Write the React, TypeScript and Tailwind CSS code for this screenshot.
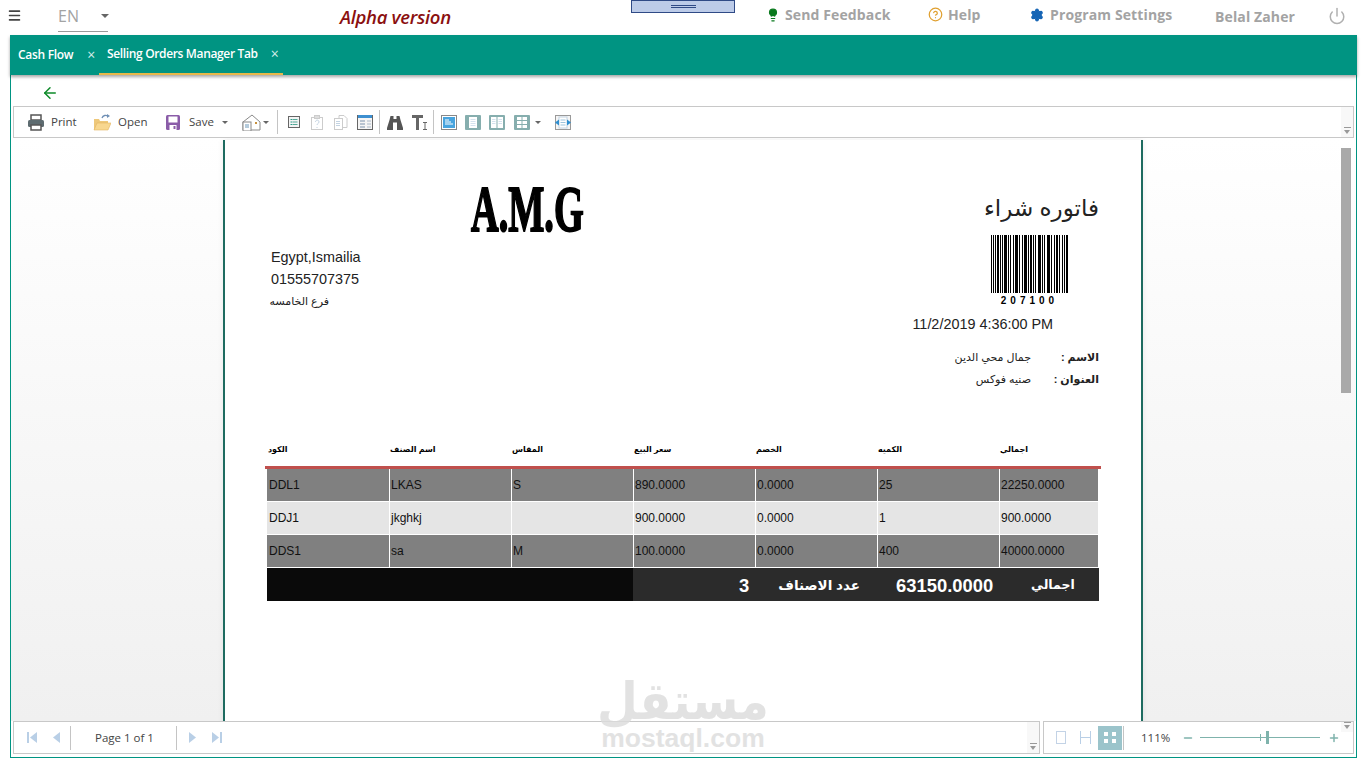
import { ArrowLeft, Menu, Power, Settings, Lightbulb, CircleHelp, Minus, Plus } from "lucide-react";

const columns = ["الكود", "اسم الصنف", "المقاس", "سعر البيع", "الخصم", "الكميه", "اجمالي"];

const rows = [
  { bg: "bg-[#808080]", cells: ["DDL1", "LKAS", "S", "890.0000", "0.0000", "25", "22250.0000"] },
  { bg: "bg-[#e5e5e5]", cells: ["DDJ1", "jkghkj", "", "900.0000", "0.0000", "1", "900.0000"] },
  { bg: "bg-[#808080]", cells: ["DDS1", "sa", "M", "100.0000", "0.0000", "400", "40000.0000"] },
];

// x, width of each bar, read off the reference
const bars = [
  [0, 1], [2, 1], [4, 1], [6, 2], [9, 1], [11, 1], [13, 3], [17, 1], [19, 1], [22, 1], [24, 3], [28, 1], [31, 1],
  [33, 3], [37, 1], [39, 2], [42, 1], [44, 1], [47, 3], [51, 1], [53, 1], [56, 3], [60, 1], [63, 1], [65, 2],
  [68, 1], [71, 1], [73, 1], [75, 2],
];

function Caret({ className = "" }: { className?: string }) {
  return <span className={"inline-block h-0 w-0 border-x-[3px] border-t-[3px] border-x-transparent border-t-[#666] " + className} />;
}

function Grip() {
  return (
    <div className="flex w-[12px] shrink-0 flex-col items-center justify-end self-stretch bg-[#f8f8f8] pb-[3px]">
      <div className="mb-[2px] h-px w-[7px] bg-[#999]" />
      <span className="h-0 w-0 border-x-[3px] border-t-[4px] border-x-transparent border-t-[#999]" />
    </div>
  );
}

function Sep() {
  return <div className="h-[24px] w-px shrink-0 bg-[#c4c4c4]" />;
}

function PageIcon({ children, w = 16 }: { children: React.ReactNode; w?: number }) {
  return (
    <svg width={w} height="17" viewBox={`0 0 ${w} 17`} className="shrink-0">
      {children}
    </svg>
  );
}

function PrintIcon() {
  return (
    <PageIcon w={18}>
      <rect x="4" y="1" width="10" height="5" fill="#fff" stroke="#555" strokeWidth="1.5" />
      <rect x="1" y="6" width="16" height="7" rx="1.5" fill="#5d6b70" />
      <rect x="4" y="11" width="10" height="5" fill="#fff" stroke="#555" strokeWidth="1.5" />
    </PageIcon>
  );
}

function OpenIcon() {
  return (
    <PageIcon w={18}>
      <path d="M1 5h5l1 2h8v9H1z" fill="#eec87a" />
      <path d="M4 9h14l-3 7H1z" fill="#f8d78f" stroke="#e3b563" strokeWidth=".6" />
      <path d="M9 4c1-3 4-3 6-2" fill="none" stroke="#6f8fb5" strokeWidth="1.3" />
      <path d="M14 0l3 2-3 2z" fill="#6f8fb5" />
    </PageIcon>
  );
}

function SaveIcon() {
  return (
    <PageIcon>
      <rect x="1" y="1" width="14" height="15" rx="1.5" fill="#8a5ca8" />
      <rect x="3.5" y="2.5" width="9" height="6" fill="#fff" />
      <rect x="4.5" y="11" width="7" height="5" fill="#fff" />
      <rect x="8.5" y="12" width="2" height="3" fill="#8a5ca8" />
    </PageIcon>
  );
}

function ExportIcon() {
  return (
    <PageIcon w={21}>
      <path d="M2 8L11 1l8 7v8H2z" fill="#fff" stroke="#8a8a8a" />
      <rect x="2" y="8" width="8" height="9" fill="#fff" stroke="#888" />
      <path d="M4 11h4M4 13h4" stroke="#6a97b8" />
      <rect x="14" y="8" width="2" height="2" fill="#c8913d" />
    </PageIcon>
  );
}

function ParamsIcon() {
  return (
    <PageIcon w={14}>
      <rect x="1.500" y="2.500" width="11" height="11" fill="#f4f4f4" stroke="#666" />
      <path d="M3.500 5.500h2M3.500 8h2M3.500 10.500h2" stroke="#2a9a88" />
      <path d="M6 5.500h4.500M6 8h4.500M6 10.500h4.500" stroke="#55aa99" />
    </PageIcon>
  );
}

function ClipboardIcon() {
  return (
    <PageIcon w={14}>
      <rect x="1.500" y="3.500" width="11" height="12" fill="#fff" stroke="#ccc" />
      <rect x="4.500" y="1.500" width="5" height="3" fill="#ddd" stroke="#ccc" />
      <path d="M5.500 8c0-2.500 3.500-2.500 3.500 0 0 1.500-2 1.500-2 3M7 13v1" fill="none" stroke="#c3d3e2" />
    </PageIcon>
  );
}

function CopyIcon() {
  return (
    <PageIcon w={15}>
      <path d="M6 1.500h5l3 3v9H6z" fill="#fff" stroke="#ccc" />
      <rect x="1.500" y="4.500" width="8" height="11" fill="#fff" stroke="#ccc" />
      <path d="M3 7.500h4M3 9.500h4M3 11.500h4" stroke="#c3d3e2" />
    </PageIcon>
  );
}

function TableIcon() {
  return (
    <PageIcon>
      <rect x=".5" y="1.500" width="15" height="14" fill="#f5f5f5" stroke="#666" />
      <rect x="1" y="1" width="14" height="3" fill="#3d8fd0" />
      <path d="M3 7h5M3 10h5M3 13h5" stroke="#7d93ad" />
      <path d="M10 7h4M10 10h4M10 13h4" stroke="#aab8c8" />
    </PageIcon>
  );
}

function BinocularsIcon() {
  return (
    <PageIcon>
      <path d="M3.500 2h3v3h3V2h3l1 4 2.500 8v2H10V8.500H6V16H0v-2l2.500-8z" fill="#555" />
    </PageIcon>
  );
}

function TextCursorIcon() {
  return (
    <PageIcon>
      <path d="M0 1h11v3H7v12H4V4H0z" fill="#666" />
      <path d="M11 8.500h4M13 8.500v7M11 15.500h4" stroke="#666" fill="none" />
    </PageIcon>
  );
}

function ViewIcon({ kind }: { kind: string }) {
  if (kind === "blue")
    return (
      <PageIcon>
        <rect x=".5" y="1.500" width="15" height="14" fill="#fff" stroke="#888" />
        <rect x="2" y="3" width="12" height="11" fill="#48a4de" />
        <path d="M4 6h4M4 8h6M4 10h8" stroke="#fff" />
      </PageIcon>
    );
  return (
    <PageIcon>
      <rect x="0" y="1" width="16" height="15" rx="1" fill="#86aeae" />
      {kind === "one" && (
        <>
          <rect x="4" y="3" width="8" height="11" fill="#fff" />
          <path d="M5.500 5.500h5M5.500 7.500h5M5.500 9.500h5M5.500 11.500h5" stroke="#d5e2ee" />
        </>
      )}
      {kind === "two" && (
        <>
          <rect x="2" y="3" width="5.500" height="11" fill="#fff" />
          <rect x="8.500" y="3" width="5.500" height="11" fill="#fff" />
          <path d="M3 5.500h3.500M3 7.500h3.500M3 9.500h3.500M9.500 5.500H13M9.500 7.500H13M9.500 9.500H13" stroke="#d5e2ee" />
        </>
      )}
      {kind === "four" && (
        <>
          <rect x="3" y="3" width="4.500" height="3" fill="#fff" />
          <rect x="8.500" y="3" width="4.500" height="3" fill="#fff" />
          <rect x="3" y="7" width="4.500" height="3" fill="#fff" />
          <rect x="8.500" y="7" width="4.500" height="3" fill="#fff" />
          <rect x="3" y="11" width="4.500" height="3" fill="#fff" />
          <rect x="8.500" y="11" width="4.500" height="3" fill="#fff" />
        </>
      )}
    </PageIcon>
  );
}

function FitWidthIcon() {
  return (
    <PageIcon>
      <rect x=".5" y="1.500" width="15" height="14" fill="#f5f5f5" stroke="#999" />
      <rect x="4" y="3" width="8" height="11" fill="#fff" stroke="#c3d3e2" />
      <path d="M5.500 6h5M5.500 8.500h5M5.500 11h5" stroke="#9ec4dd" />
      <path d="M0 8.500l4-3v6zM16 8.500l-4-3v6z" fill="#2f8fd0" />
    </PageIcon>
  );
}

function NavIcon({ dir, edge }: { dir: "left" | "right"; edge?: boolean }) {
  const d = dir === "left" ? "M8 1v11L1 6.500z" : "M1 1v11l7-5.500z";
  return (
    <svg width={edge ? 11 : 9} height="13" viewBox={`0 0 ${edge ? 11 : 9} 13`} className="shrink-0">
      {edge && dir === "left" && <rect x="0" y="1" width="2" height="11" fill="#b9cfe6" />}
      <path d={d} fill="#b9cfe6" transform={edge && dir === "left" ? "translate(2 0)" : ""} />
      {edge && dir === "right" && <rect x="9" y="1" width="2" height="11" fill="#b9cfe6" />}
    </svg>
  );
}

export default function App() {
  return (
    <div className="relative h-[768px] w-[1366px] overflow-hidden bg-white font-['Open_Sans',sans-serif]">
      {/* top strip */}
      <header className="relative flex h-[35px] items-center text-[14px] font-bold tracking-[0.12px] text-[#a3a3a3]">
        <Menu className="ml-[7px] -translate-y-[2px] text-[#444]" size={15} strokeWidth={2.5} />
        <div className="ml-[36px] flex h-[32px] w-[50px] items-center self-start border-b border-[#999] text-[16px] font-normal tracking-normal">
          <span>EN</span>
          <Caret className="ml-[22px] border-x-[4px] border-t-[4px]" />
        </div>
        <span className="ml-[232px] w-[111px] -translate-y-px whitespace-nowrap text-[18.5px] font-semibold italic tracking-[-0.3px] text-[#8b1010]">Alpha version</span>
        <div className="absolute left-[631px] top-0 flex h-[13px] w-[104px] flex-col items-center justify-center gap-[1px] border border-[#2f4a86] bg-[#bccbe8]">
          <div className="h-px w-[25px] bg-[#2f4a86]" />
          <div className="h-px w-[25px] bg-[#2f4a86]" />
        </div>
        <Lightbulb className="ml-[315px] -translate-y-[3px] fill-[#0a7a1e] text-[#0a7a1e]" size={14} />
        <span className="ml-[5px] w-[105px] -translate-y-[3px] whitespace-nowrap">Send Feedback</span>
        <CircleHelp className="ml-[38px] -translate-y-[3px] text-[#e0a030]" size={15} />
        <span className="ml-[5px] w-[33px] -translate-y-[3px]">Help</span>
        <Settings className="ml-[49px] -translate-y-[3px] fill-[#1665b5] text-[#1665b5]" size={14} />
        <span className="ml-[6px] w-[122px] -translate-y-[3px] whitespace-nowrap">Program Settings</span>
        <span className="ml-[43px] w-[78px] -translate-y-[1px] whitespace-nowrap">Belal Zaher</span>
        <Power className="ml-[35px] -translate-y-[2px] text-[#b0b0b0]" size={18} />
      </header>

      <main className="ml-[10px] flex h-[723px] w-[1347px] flex-col border-x border-b border-[#009482]">
        {/* tabs */}
        <div className="-mx-px flex h-[40px] shrink-0 items-end bg-[#009482] text-[12px] font-semibold text-white shadow-[0_2px_3px_rgba(0,0,0,0.35)]">
          <div className="flex h-[40px] w-[89px] items-center pl-[8px]">
            <span className="whitespace-nowrap tracking-[-0.3px]">Cash Flow</span>
            <span className="ml-[14px] -translate-y-[1px] text-[14px] font-normal text-[#d5eeea]">×</span>
          </div>
          <div className="flex h-[40px] w-[184px] items-center border-b-2 border-[#e8b84a] pl-[8px]">
            <span className="whitespace-nowrap tracking-[-0.35px]">Selling Orders Manager Tab</span>
            <span className="ml-[13px] -translate-y-[1px] text-[14px] font-normal text-[#d5eeea]">×</span>
          </div>
        </div>

        {/* back */}
        <div className="flex h-[31px] shrink-0 items-center pl-[30px] pt-[4px]">
          <ArrowLeft className="text-[#0d8a28]" size={18} strokeWidth={2} />
        </div>

        {/* report toolbar */}
        <div className="mx-[2px] flex h-[32px] shrink-0 items-center border border-[#c8c8c8] text-[11.5px] text-[#444]">
          <div className="flex flex-1 items-center">
            <div className="ml-[13px]"><PrintIcon /></div>
            <span className="ml-[6px] w-[25px]">Print</span>
            <div className="ml-[17px]"><OpenIcon /></div>
            <span className="ml-[7px] w-[29px]">Open</span>
            <div className="ml-[18px]"><SaveIcon /></div>
            <span className="ml-[8px] w-[25px]">Save</span>
            <Caret className="ml-[8px]" />
            <div className="ml-[13px]"><ExportIcon /></div>
            <Caret className="ml-[1px]" />
            <div className="ml-[8px]"><Sep /></div>
            <div className="ml-[9px]"><ParamsIcon /></div>
            <div className="ml-[9px]"><ClipboardIcon /></div>
            <div className="ml-[9px]"><CopyIcon /></div>
            <div className="ml-[9px]"><TableIcon /></div>
            <div className="ml-[6px]"><Sep /></div>
            <div className="ml-[7px]"><BinocularsIcon /></div>
            <div className="ml-[9px]"><TextCursorIcon /></div>
            <div className="ml-[5px]"><Sep /></div>
            <div className="ml-[7px]"><ViewIcon kind="blue" /></div>
            <div className="ml-[8px]"><ViewIcon kind="one" /></div>
            <div className="ml-[8px]"><ViewIcon kind="two" /></div>
            <div className="ml-[9px]"><ViewIcon kind="four" /></div>
            <Caret className="ml-[5px]" />
            <div className="ml-[14px]"><FitWidthIcon /></div>
          </div>
          <Grip />
        </div>

        {/* document area */}
        <div className="flex h-[583px] shrink-0 justify-start overflow-hidden bg-linear-to-b from-white to-[#f0f0f0]">
          <div className="ml-[212px] mt-[2px] h-full w-[920px] shrink-0 border-x-2 border-[#1e6b60] bg-white px-[42px] font-['Liberation_Sans','DejaVu_Sans',sans-serif] shadow-[0_0_6px_rgba(0,0,0,0.08)]">
            <div className="flex h-[300px] items-start">
              <div className="w-[204px] pt-[106px] text-[14.4px] leading-[22px] text-[#222]">
                <div className="pl-[4px]">Egypt,Ismailia</div>
                <div className="pl-[4px]">01555707375</div>
                <div className="text-[11px]" dir="rtl" style={{ width: 62 }}>فرع الخامسه</div>
              </div>
              <div className="mt-[41px] w-[113px] origin-left scale-x-[0.58] whitespace-nowrap font-['Liberation_Serif',serif] text-[66px] font-bold leading-[56px] text-black [-webkit-text-stroke:2px_black]">
                A.M.G
              </div>
              <div className="flex flex-1 flex-col items-end text-[#222]">
                <div className="mt-[51px] h-[34px] text-[23px] leading-[34px]" dir="rtl">فاتوره شراء</div>
                <div className="mr-[31px] mt-[10px] flex w-[77px] flex-col items-center">
                  <svg width="77" height="58" viewBox="0 0 77 58">
                    {bars.map(([x, w]) => (
                      <rect key={x} x={x} y="0" width={w} height="58" fill="#000" />
                    ))}
                  </svg>
                  <div className="mt-[2px] whitespace-nowrap text-[10px] font-bold leading-[12px] tracking-[4px] text-black">207100</div>
                </div>
                <div className="mr-[46px] mt-[8px] whitespace-nowrap text-[14.4px] leading-[18px]">11/2/2019 4:36:00 PM</div>
                <div className="mt-[13px] flex h-[22px] items-center text-[11px]">
                  <span className="w-[100px] text-right" dir="rtl">جمال محي الدين</span>
                  <span className="w-[68px] font-bold" dir="rtl">الاسم :</span>
                </div>
                <div className="flex h-[22px] items-center text-[11px]">
                  <span className="w-[100px] text-right" dir="rtl">صنيه فوكس</span>
                  <span className="w-[68px] font-bold" dir="rtl">العنوان :</span>
                </div>
              </div>
            </div>

            {/* table */}
            <div className="grid h-[26px] grid-cols-[repeat(6,122px)_100px] items-start pt-[4px] text-[8px] font-bold leading-[12px] text-black">
              {columns.map((c) => (
                <div key={c} dir="rtl" className="pl-[1px] text-left">{c}</div>
              ))}
            </div>
            <div className="-mx-[2px] h-[3px] bg-[#c0504d]" />
            {rows.map((r) => (
              <div key={r.cells[0]} className={"grid h-[33px] grid-cols-[repeat(6,122px)_100px] border-b border-white text-[12px] leading-[32px] text-[#111] " + r.bg}>
                {r.cells.map((c, i) => (
                  <div key={i} className={i === 0 ? "pl-[2px]" : i === 6 ? "border-x border-white pl-[1px]" : "border-l border-white pl-[1px]"}>{c}</div>
                ))}
              </div>
            ))}
            <div className="flex h-[33px] text-[18.4px] font-bold leading-[33px] text-white">
              <div className="w-[366px] bg-[#0a0a0a]" />
              <div className="flex flex-1 items-center bg-[#2b2b2b] pt-[1px]">
                <span className="ml-[106px] w-[10px]">3</span>
                <span className="ml-[30px] w-[81px] whitespace-nowrap text-[13.5px]" dir="rtl">عدد الاصناف</span>
                <span className="ml-[36px] w-[97px]">63150.0000</span>
                <span className="ml-[38px] text-[12.5px]" dir="rtl">اجمالي</span>
              </div>
            </div>
          </div>
          <div className="ml-[198px] mt-[10px] h-[245px] w-[10px] shrink-0 bg-[#a9a9a9]" />
        </div>

        {/* bottom bars */}
        <div className="mx-[2px] flex h-[33px] shrink-0 gap-[3px] text-[11.5px] text-[#444]">
          <div className="flex w-[1027px] items-center border border-[#c8c8c8]">
            <div className="flex flex-1 items-center">
              <div className="ml-[13px]"><NavIcon dir="left" edge /></div>
              <div className="ml-[14px]"><NavIcon dir="left" /></div>
              <div className="ml-[9px]"><Sep /></div>
              <span className="ml-[24px] w-[59px] whitespace-nowrap">Page 1 of 1</span>
              <div className="ml-[22px]"><Sep /></div>
              <div className="ml-[11px]"><NavIcon dir="right" /></div>
              <div className="ml-[14px]"><NavIcon dir="right" edge /></div>
            </div>
            <Grip />
          </div>
          <div className="flex flex-1 items-center border border-[#c8c8c8]">
            <div className="ml-[12px] h-[13px] w-[10px] border border-[#c3d3e6]" />
            <div className="ml-[14px] flex h-[13px] w-[11px] items-center border-x border-[#b9cfe6]">
              <div className="h-px w-full bg-[#b9cfe6]" />
            </div>
            <div className="ml-[7px] grid h-[24px] w-[24px] grid-cols-2 place-content-center place-items-center gap-[3px] bg-[#9bc4cb] px-[6px]">
              <div className="h-[4px] w-[4px] bg-white" />
              <div className="h-[4px] w-[4px] bg-white" />
              <div className="h-[4px] w-[4px] bg-white" />
              <div className="h-[4px] w-[4px] bg-white" />
            </div>
            <div className="ml-[1px]"><Sep /></div>
            <span className="ml-[17px] w-[30px]">111%</span>
            <Minus className="ml-[11px] text-[#7fb3ac]" size={12} strokeWidth={3} />
            <div className="relative ml-[6px] h-px w-[120px] bg-[#7fb3ac]">
              <div className="absolute left-[60px] top-[-3px] h-[7px] w-px bg-[#7fb3ac]" />
              <div className="absolute left-[66px] top-[-6px] h-[13px] w-[3px] bg-[#7fb3ac]" />
            </div>
            <Plus className="ml-[8px] text-[#7fb3ac]" size={12} strokeWidth={3} />
            <div className="ml-auto self-stretch"><Grip /></div>
          </div>
        </div>
      </main>

      {/* mostaql watermark */}
      <div className="pointer-events-none absolute left-[590px] top-[671px] flex w-[186px] flex-col items-center font-['DejaVu_Sans',sans-serif] font-bold text-[#dcdcdc] opacity-80">
        <div className="mb-[2.5px] mt-[8px] h-[44px] origin-center scale-y-[1.1] text-[47px] leading-[44px]" dir="rtl">مستقل</div>
        <div className="font-['Liberation_Sans',sans-serif] text-[26.5px] leading-[25px]">mostaql.com</div>
      </div>
    </div>
  );
}
